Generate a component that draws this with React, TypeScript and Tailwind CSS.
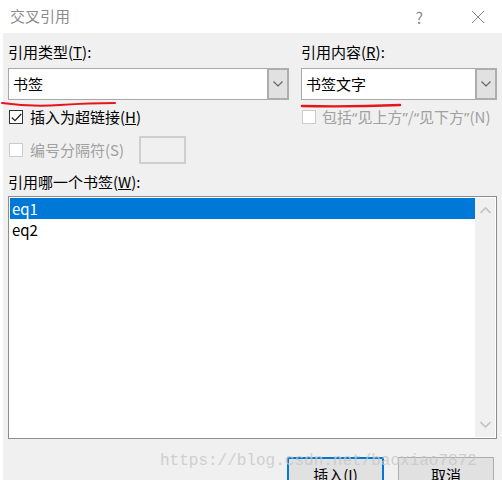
import React from "react";

const FONT = { fontFamily: '"Noto Sans CJK SC", "Noto Sans", sans-serif' };
const Q = ({ c }: { c: string }) => (
  <span style={{ fontFamily: '"Noto Sans", sans-serif' }}>{c}</span>
);

function Chevron() {
  return (
    <svg width="10" height="6" viewBox="0 0 10 6">
      <path d="M0.5 0.5 L5 5 L9.5 0.5" fill="none" stroke="#606060" strokeWidth="1.1" />
    </svg>
  );
}

function Combo({ text, width }: { text: string; width: string }) {
  return (
    <div className={`flex h-[32px] shrink-0 ${width}`}>
      <div className="flex-1 flex items-center bg-white border border-r-0 border-[#a8a8a8] pl-[4px] text-[15px] text-black">
        {text}
      </div>
      <div className="w-[22px] flex items-center justify-center bg-[#e1e1e1] border-2 border-[#adadad]">
        <Chevron />
      </div>
    </div>
  );
}

function CheckBox({ checked, disabled }: { checked?: boolean; disabled?: boolean }) {
  return (
    <div
      className={`shrink-0 w-[14px] h-[14px] bg-white border flex items-center justify-center ${
        disabled ? "border-[#cccccc]" : "border-[#333333]"
      }`}
    >
      {checked && (
        <svg width="11" height="9" viewBox="0 0 11 9">
          <path d="M0.8 4.5 L4 7.6 L10.2 1" fill="none" stroke="#222" strokeWidth="1.3" />
        </svg>
      )}
    </div>
  );
}

export default function App() {
  return (
    <div className="w-[502px] h-[480px] bg-white relative overflow-hidden flex flex-col" style={FONT}>
      {/* title bar */}
      <div className="h-[33px] shrink-0 flex items-center pl-[10px] text-[15px] text-[#8c8c8c]">
        <span>交叉引用</span>
        <div className="flex-1" />
        <span className="text-[16px] mr-[48px]">?</span>
        <svg width="14" height="14" viewBox="0 0 14 14" className="mr-[17px]">
          <path d="M1 1 L13 13 M13 1 L1 13" stroke="#8c8c8c" strokeWidth="1" />
        </svg>
      </div>

      {/* body */}
      <div className="flex-1 min-h-0 overflow-hidden ml-[3px] bg-[#f0f0f0] pl-[5px] pr-[5px] text-[15px] text-black">
        <div className="flex gap-[12px] pt-[9px]">
          <div className="w-[281px] flex flex-col">
            <div className="h-[20px] leading-[20px] mb-[6px]">
              引用类型(<span className="underline">T</span>):
            </div>
            <Combo text="书签" width="w-[281px]" />
            <div className="flex items-center mt-[10px] h-[14px] pl-[1px]">
              <CheckBox checked />
              <span className="ml-[7px] leading-[20px] whitespace-nowrap">
                插入为超链接(<span className="underline">H</span>)
              </span>
            </div>
          </div>
          <div className="w-[196px] flex flex-col">
            <div className="h-[20px] leading-[20px] mb-[6px]">
              引用内容(<span className="underline">R</span>):
            </div>
            <Combo text="书签文字" width="w-[196px]" />
            <div className="flex items-center mt-[10px] h-[14px] pl-[1px]">
              <CheckBox disabled />
              <span className="ml-[6px] leading-[20px] text-[#a0a0a0] whitespace-nowrap">
                包括<Q c="“" />见上方<Q c="”" />/<Q c="“" />见下方<Q c="”" />(N)
              </span>
            </div>
          </div>
        </div>

        <div className="flex items-center mt-[12px] h-[28px] pl-[1px]">
          <CheckBox disabled />
          <span className="ml-[7px] text-[#a0a0a0] whitespace-nowrap">编号分隔符(S)</span>
          <div className="ml-[15px] shrink-0 w-[47px] h-[28px] border-2 border-[#cfcfcf] bg-[#f0f0f0]" />
        </div>

        <div className="h-[20px] leading-[20px] mt-[8px]">
          引用哪一个书签(<span className="underline">W</span>):
        </div>

        <div className="mt-[4px] w-[489px] h-[243px] border border-[#8c8c8c] bg-white flex p-[1px]">
          <div className="flex-1 flex flex-col">
            <div className="h-[21px] bg-[#0078d7] text-white pl-[2px] leading-[21px]">eq1</div>
            <div className="h-[21px] pl-[2px] leading-[21px]">eq2</div>
          </div>
          <div className="w-[20px] bg-[#f0f0f0] flex flex-col items-center justify-between py-[9px]">
            <svg width="11" height="7" viewBox="0 0 11 7">
              <path d="M0.5 6 L5.5 1 L10.5 6" fill="none" stroke="#c2c2c2" strokeWidth="1.6" />
            </svg>
            <svg width="11" height="7" viewBox="0 0 11 7">
              <path d="M0.5 1 L5.5 6 L10.5 1" fill="none" stroke="#c2c2c2" strokeWidth="1.6" />
            </svg>
          </div>
        </div>

        <div className="flex mt-[18px] pl-[279px] gap-[14px]">
          <div className="shrink-0 w-[97px] h-[36px] border-2 border-[#0078d7] bg-[#e1e1e1] flex items-center justify-center">
            插入(<span className="underline">I</span>)
          </div>
          <div className="shrink-0 w-[96px] h-[36px] border border-[#adadad] bg-[#e1e1e1] flex items-center justify-center">
            取消
          </div>
        </div>
      </div>

      {/* red annotation underlines */}
      <svg className="absolute left-0 top-0 pointer-events-none" width="502" height="480">
        <path d="M2 103 Q 30 107 60 105 T 115 103" fill="none" stroke="#e8141c" strokeWidth="2" strokeLinecap="round" />
        <path d="M302 106 Q 350 107 400 105" fill="none" stroke="#e8141c" strokeWidth="2.4" strokeLinecap="round" />
      </svg>

      {/* watermark */}
      <div
        className="absolute left-[160px] top-[450px] text-[16px] leading-[22px] text-[#c8c8c8] opacity-80 whitespace-nowrap pointer-events-none"
        style={{ fontFamily: '"Liberation Mono", monospace' }}
      >
        https://blog.csdn.net/baoxiao7872
      </div>
    </div>
  );
}
